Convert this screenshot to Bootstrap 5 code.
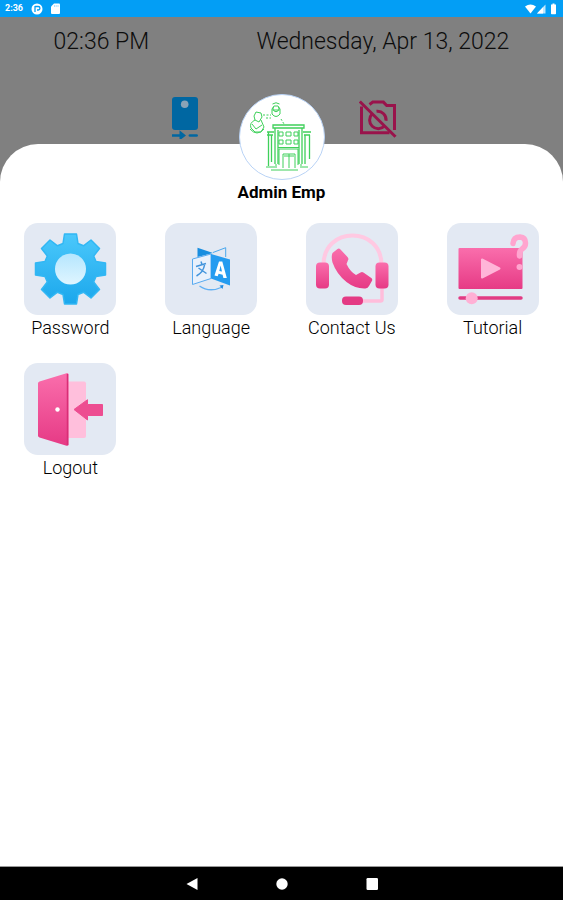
<!DOCTYPE html>
<html lang="en">
<head>
<meta charset="utf-8">
<meta name="viewport" content="width=device-width, initial-scale=1">
<title>Admin Emp</title>
<link href="https://cdn.jsdelivr.net/npm/bootstrap@5.3.0/dist/css/bootstrap.min.css" rel="stylesheet">
<style>
  body { font-family: Roboto, "Liberation Sans", sans-serif; background: #808080; color: #000; }
  svg { display: block; }
  .status-bar { height: 17px; background: #039ef5; color: #fff; font-size: 9px; font-weight: 700; padding: 0 5px; }
  .clock-row { font-size: 23px; line-height: 28px; font-weight: 300; color: #0c0c0c; padding-top: 11px; }
  .clock-time { flex: 0 0 36%; }
  .actions { height: 88px; gap: 154px; padding-top: 41px; }
  .sheet { background: #fff; border-radius: 38px 38px 0 0; }
  .avatar { width: 86px; height: 86px; margin-top: -50px; background: #fff; border: 1px solid #b9d3f6; }
  .person { font-size: 17px; line-height: 24px; font-weight: 700; }
  .tiles { padding-top: 19px; row-gap: 23px; }
  .tile { font-size: 18px; line-height: 25px; font-weight: 300; color: #000; }
  .tile-icon { width: 92px; height: 92px; border-radius: 14px; background: #e3e9f3; }
  .system-nav { height: 34px; background: #000; border-top: 1px solid #999; gap: 70px; }
</style>
<script src="https://cdn.jsdelivr.net/npm/bootstrap@5.3.0/dist/js/bootstrap.bundle.min.js"></script>
</head>
<body class="d-flex flex-column min-vh-100">
<div class="status-bar d-flex justify-content-between align-items-center">
  <div class="d-flex align-items-center gap-2">
    <span>2:36</span>
    <svg width="12" height="12" viewBox="0 0 12 12"><circle cx="6" cy="6" r="5.5" fill="#fff"/><path d="M4 3v6M4 3.5h3.2a1.7 1.7 0 0 1 0 3.5H6" stroke="#039ef5" stroke-width="1.3" fill="none"/></svg>
    <svg width="9" height="11" viewBox="0 0 9 11"><path d="M3 .5h5q1 0 1 1V10q0 1-1 1H1q-1 0-1-1V3.500z" fill="#fff"/><path d="M3.500 2v2M5.200 2v2M7 2v2" stroke="#9bd8fb" stroke-width=".8"/></svg>
  </div>
  <svg width="33" height="12" viewBox="0 0 33 12" fill="#fff"><path d="M0 3.500Q5.500-.7 11 3.500L5.500 10.500z"/><path d="M12 10.500L20.500 1.500v9z" opacity=".75"/><path d="M12 10.500L18 4.200v6.300z"/><path d="M26 1.500h1.500V.5h2v1H31v9q0 .7-.7.700h-3.600q-.7 0-.7-.7z"/></svg>
</div>
<header>
  <div class="clock-row d-flex text-center">
    <div class="clock-time">02:36 PM</div>
    <div class="flex-grow-1">Wednesday, Apr 13, 2022</div>
  </div>
  <div class="actions d-flex justify-content-center align-items-start">
    <button type="button" class="btn p-0 border-0" aria-label="Rear camera">
      <svg width="38" height="42" viewBox="0 0 38 42"><rect x="5" y="0" width="26" height="33" rx="3" fill="#0067a2"/><circle cx="17.700" cy="7.300" r="3.800" fill="#8ba3b6"/><path d="M5 37.200h7.500v-4l6.500 5.300-6.500 5v-3.700H5zM23 37.200h6.500q1.500 0 1.500 1.300t-1.500 1.300H23q-1.500 0-1.500-1.300t1.500-1.300z" fill="#0067a2"/></svg>
    </button>
    <button type="button" class="btn p-0 border-0" aria-label="Camera off">
      <svg width="38" height="42" viewBox="0 0 38 42" fill="none" stroke="#99134b" stroke-width="3"><path d="M.8 4.500L36.500 39.700"/><path d="M2.500 9.500v26.300h28M10.500 7.500l3.300-2.400h10.600l3.300 3.400h7.800v24.500"/><path d="M13 17a8.500 8.500 0 1 0 12.500 12M17.500 14.300a8.500 8.500 0 0 1 9.500 9.500"/></svg>
    </button>
  </div>
</header>
<main class="sheet flex-grow-1">
  <div class="d-flex flex-column align-items-center">
    <div class="avatar rounded-circle position-relative">
      <svg width="84" height="84" viewBox="240 95 84 84" fill="none" stroke="#3fd05a" stroke-width="1">
        <path d="M273 125h31v3h-31zM275 128v36M302 128v36M278 130v34M299 130v34" stroke-width="1.300"/>
        <path d="M267 132h7M303 132h8M267 135h6M304 135h6" stroke-width="1.400"/>
        <path d="M268.500 132v34M271.500 135v27M305 135v29M309.500 135v24" stroke-width="1.300"/>
        <path d="M279 132h4v4h-4zM286 132h5v4h-5zM294 132h4v4h-4zM279 140h4v4h-4zM286 140h5v4h-5zM294 140h4v4h-4z"/>
        <path d="M278 147.500h21M279 149h19v16M279 149v16M283 168v-14h12v14M289 154v14M284 156h10M266 167h9M271 170h27M302 167h6M276 164v4M301 164v4"/>
        <path d="M272 114v-5l2-3h4l2 3v5M273.500 107a3 3 0 1 0 5 0M272 114q4 5 8 0M272.500 110h7M272.500 104q3.500-2.500 7 0" />
        <path d="M255 120q-6 3-4 8l4 4h6l3-5-3-7M254 116l2-4 5 1 1 4-3 5-4-2zM250 129q7 8 14 0M252 124l4 5 6-4"/>
        <path d="M263 115h8M266 118h5M281 119l3 5" stroke-dasharray="2 1.500"/>
      </svg>
    </div>
    <div class="person">Admin Emp</div>
  </div>
  <div class="tiles row row-cols-4 g-0 gx-0">
    <div class="col text-center">
      <button type="button" class="tile btn p-0 border-0">
        <span class="tile-icon d-block mx-auto">
          <svg width="92" height="92" viewBox="0 0 92 92">
            <defs>
              <linearGradient id="gearFill" x1="0" y1="0" x2="0" y2="1"><stop offset="0" stop-color="#4bc8fb"/><stop offset="1" stop-color="#1ba7ec"/></linearGradient>
              <linearGradient id="hubFill" x1="0" y1="0" x2="0" y2="1"><stop offset="0" stop-color="#b5e6fe"/><stop offset="1" stop-color="#dff5ff"/></linearGradient>
              <linearGradient id="pinkFill" x1="0" y1="0" x2="0" y2="1"><stop offset="0" stop-color="#fa6eac"/><stop offset="1" stop-color="#e63a85"/></linearGradient>
            </defs>
            <g transform="translate(46.500 46)" fill="url(#gearFill)">
              <path stroke="#31b7f4" stroke-width="1.500" stroke-linejoin="round" d="M-6-35H6L7.500-25.500 13-23.200 20.500-29 29-20.500 23.200-13 25.500-7.500 35-6V6L25.500 7.500 23.200 13 29 20.500 20.500 29 13 23.200 7.500 25.500 6 35H-6L-7.500 25.500-13 23.200-20.500 29-29 20.500-23.200 13-25.500 7.500-35 6V-6L-25.500-7.500-23.200-13-29-20.500-20.500-29-13-23.200-7.500-25.500z"/>
              <circle r="15.500" fill="url(#hubFill)"/>
            </g>
          </svg>
        </span>
        Password
      </button>
    </div>
    <div class="col text-center">
      <button type="button" class="tile btn p-0 border-0">
        <span class="tile-icon d-block mx-auto">
          <svg width="92" height="92" viewBox="0 0 92 92">
            <path d="M32.500 24.700L48 30 32.500 34z" fill="#188ee0"/>
            <path d="M48 29.500L60.700 24.700V34" fill="none" stroke="#4ba8ed" stroke-width="1"/>
            <path d="M27.500 36L46 31v24.500L27.500 61.500z" fill="#e9f1fc" stroke="#58aaf0" stroke-width="1"/>
            <path d="M46 31l19 5.500v26L46 55.500z" fill="#259cf0"/>
            <path d="M31 43.500l10-3M36 38.500l1 3M39.500 42q-1 7-8 11M33.500 45l8 5.500" fill="none" stroke="#4294dc" stroke-width="1.500"/>
            <path d="M49.500 52.500L54 38.500h3.300L61.800 55h-3.400l-.8-3.200-4-1-.9 2.500zM54.300 48l2.700.6-1.400-6z" fill="#fff" fill-rule="evenodd"/>
            <path d="M34.500 63q10 7 23 1" fill="none" stroke="#61b0f3" stroke-width="1.300"/><path d="M54.500 62.500l4-.5-1 4z" fill="#208ce2"/>
          </svg>
        </span>
        Language
      </button>
    </div>
    <div class="col text-center">
      <button type="button" class="tile btn p-0 border-0">
        <span class="tile-icon d-block mx-auto">
          <svg width="92" height="92" viewBox="0 0 92 92">
            <path d="M17.500 41C18 23 31 12.500 46.500 12.500S75 23 75.500 41" fill="none" stroke="#ffc9e2" stroke-width="4"/>
            <path d="M76 64v12.500q0 1.500-1.500 1.500H56" fill="none" stroke="#ffbddb" stroke-width="3.500"/>
            <rect x="10" y="39.500" width="13" height="26" rx="4" fill="url(#pinkFill)"/>
            <rect x="69.500" y="39.500" width="13" height="26" rx="4" fill="url(#pinkFill)"/>
            <rect x="36" y="73.500" width="21" height="8.500" rx="4" fill="#e43a84"/>
            <path d="M26.500 30L31.500 26q1.500-1 3 .5l7 7.500q1.500 1.500.5 3.300L40.500 41q3.500 7.500 9.500 11l4.500-2.500q1.500-1 3.300.200l7.500 5.300q1.500 1.200.7 2.800L63 63q-1 2-3.500 2.500-10 .5-19-6.500-10-8-14-19.500-1.500-6 0-9.500z" fill="url(#pinkFill)"/>
          </svg>
        </span>
        Contact Us
      </button>
    </div>
    <div class="col text-center">
      <button type="button" class="tile btn p-0 border-0">
        <span class="tile-icon d-block mx-auto">
          <svg width="92" height="92" viewBox="0 0 92 92">
            <rect x="11.500" y="25" width="64" height="41" rx="1" fill="url(#pinkFill)"/>
            <path d="M35 36.500v18L52.500 45.500z" fill="#ffb5d8" stroke="#ffb5d8" stroke-width="2" stroke-linejoin="round"/>
            <path d="M13 75h61" stroke="#e23a83" stroke-width="3.500" stroke-linecap="round"/>
            <circle cx="24.700" cy="75.300" r="6" fill="#ffb0d5"/>
            <path d="M66 20.500q.5-6.500 7-6.500 5.500.5 5.500 6 0 4-3.500 6-3 2-2.500 7" fill="none" stroke="#ffa5cf" stroke-width="5.500" stroke-linecap="round"/>
            <circle cx="72.500" cy="44" r="3" fill="#ffa5cf"/>
          </svg>
        </span>
        Tutorial
      </button>
    </div>
    <div class="col text-center">
      <button type="button" class="tile btn p-0 border-0">
        <span class="tile-icon d-block mx-auto">
          <svg width="92" height="92" viewBox="0 0 92 92">
            <path d="M44 18.500h16q2 0 2 2v52.500q0 2-2 2H44z" fill="#ffbfdc"/>
            <path d="M15.500 18.500L42.500 10.200q2-.5 2 1.500v69.500q0 2-2 1.500L15.500 74.500Q14 74 14 72.500V20.500q0-1.500 1.500-2z" fill="url(#pinkFill)"/>
            <path d="M43.500 11v71" stroke="#d92e76" stroke-width="1.500"/>
            <circle cx="33.500" cy="46.500" r="2.200" fill="#fff"/>
            <path d="M50 46.500L63.500 36.700V41.500H78.500V52.500H63.500V57z" fill="#ed4d91" stroke="#ed4d91" stroke-width="1" stroke-linejoin="round"/>
          </svg>
        </span>
        Logout
      </button>
    </div>
  </div>
</main>
<nav class="system-nav d-flex justify-content-center align-items-center" aria-label="System">
  <button type="button" class="btn p-0 border-0" aria-label="Back"><svg width="20" height="14" viewBox="0 0 20 14"><path d="M4.500 7L15.500 1v12z" fill="#fff"/></svg></button>
  <button type="button" class="btn p-0 border-0" aria-label="Home"><svg width="20" height="14" viewBox="0 0 20 14"><circle cx="10" cy="7" r="5.700" fill="#fff"/></svg></button>
  <button type="button" class="btn p-0 border-0" aria-label="Recent apps"><svg width="20" height="14" viewBox="0 0 20 14"><rect x="4.500" y="1" width="11.500" height="12" rx="1.200" fill="#fff"/></svg></button>
</nav>
</body>
</html>
